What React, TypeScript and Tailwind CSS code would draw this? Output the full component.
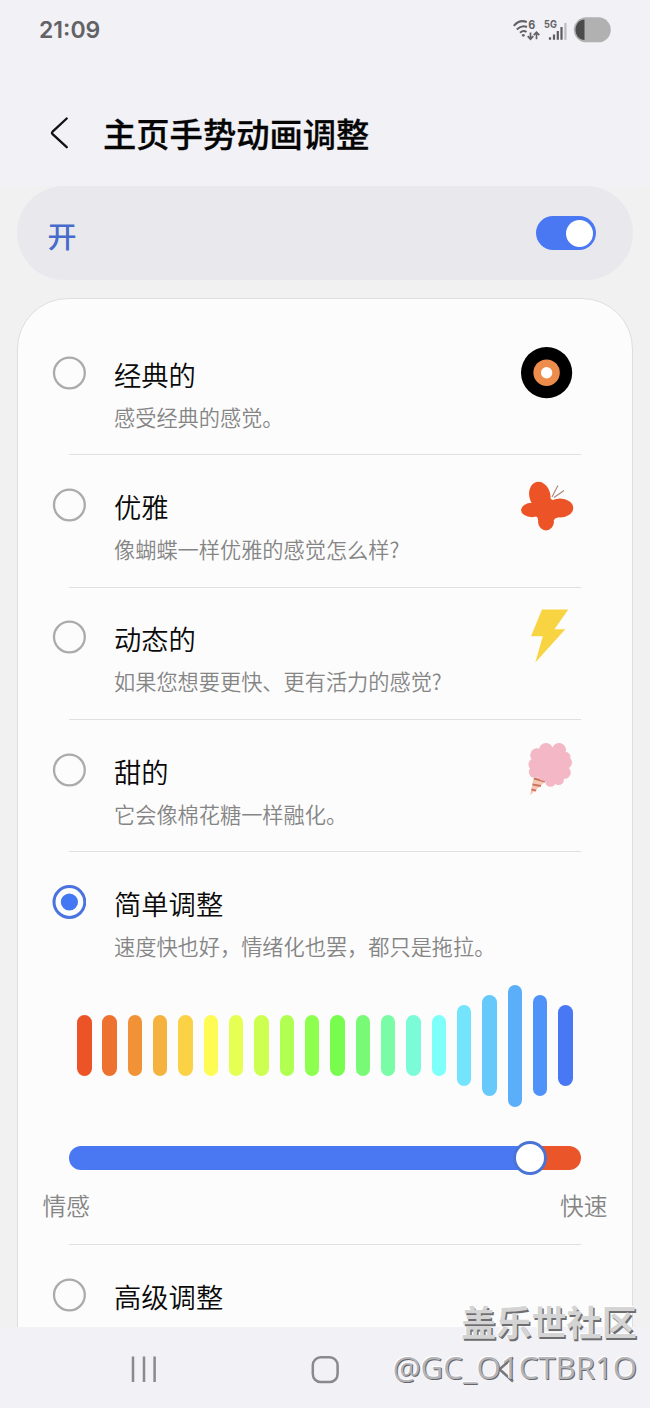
import React from 'react';

const BARS: { color: string; height: number }[] = [
  { color: '#ec5428', height: 61 },
  { color: '#ee722f', height: 61 },
  { color: '#f19237', height: 61 },
  { color: '#f6b23f', height: 61 },
  { color: '#fbd245', height: 61 },
  { color: '#fffb55', height: 61 },
  { color: '#e6ff53', height: 61 },
  { color: '#cdff51', height: 61 },
  { color: '#b1ff50', height: 61 },
  { color: '#8dff4f', height: 61 },
  { color: '#78fc4e', height: 61 },
  { color: '#79fa77', height: 61 },
  { color: '#7afba5', height: 61 },
  { color: '#7cfbd9', height: 61 },
  { color: '#7efffa', height: 61 },
  { color: '#73e4fb', height: 81 },
  { color: '#67c8fa', height: 101 },
  { color: '#5aaefa', height: 122 },
  { color: '#4f93f9', height: 101 },
  { color: '#4978f5', height: 81 },
];

function Radio({ checked = false }: { checked?: boolean }) {
  return (
    <svg className="size-[34px] shrink-0" viewBox="0 0 34 34" fill="none">
      {checked ? (
        <>
          <circle cx="17.4" cy="17" r="15.4" stroke="#4a73e0" strokeWidth="3" />
          <circle cx="17.4" cy="17" r="8.6" fill="#4478f2" />
        </>
      ) : (
        <circle cx="17.4" cy="17" r="15.4" stroke="#ababab" strokeWidth="2.3" />
      )}
    </svg>
  );
}

function Option({ title, text, checked, icon }: { title: string; text: string; checked?: boolean; icon?: React.ReactNode }) {
  return (
    <div className="flex h-[132.25px] items-start pt-[32.75px] pl-[34px] pr-[58px]">
      <Radio checked={checked} />
      <div className="ml-[28px] flex grow flex-col">
        <span className="h-[37px] text-[27.3px] leading-[37px] font-[350] text-[#0a0a0a]">{title}</span>
        <span className="mt-[9px] h-[30px] whitespace-nowrap text-[21.2px] leading-[30px] font-[350] text-[#858585]">{text}</span>
      </div>
      {icon}
    </div>
  );
}

const Divider = () => <div className="mx-[51px] -mt-px h-px bg-[#e0e0e0]" />;

const Record = () => (
  <svg className="-mt-[10px] h-[54px] w-[54px] shrink-0" viewBox="0 0 54 54">
    <circle cx="26.6" cy="26.7" r="25.6" fill="#000" />
    <circle cx="26.6" cy="26.7" r="13.2" fill="#ee8c4c" />
    <circle cx="26.6" cy="26.7" r="5.7" fill="#fff" />
  </svg>
);

const Butterfly = () => (
  <svg className="-mt-[10px] h-[54px] w-[54px] shrink-0" viewBox="0 0 54 54">
    <g fill="#ec5428">
      <ellipse cx="19.8" cy="17.4" rx="10.5" ry="13.7" transform="rotate(-14 19.8 17.4)" />
      <ellipse cx="40" cy="30" rx="13.2" ry="9.5" />
      <ellipse cx="12" cy="32" rx="11" ry="7.2" />
      <ellipse cx="26" cy="43.5" rx="8" ry="9" />
      <path d="M14 25L30 19.500Q31 22 35 22.500L38 39.500Q35 39.500 34 42H18Q18 38.500 15 38z" />
    </g>
    <path d="M32 19L37.900 7.600M34 19.500L44 12.500" stroke="#a88577" strokeWidth="1.100" />
  </svg>
);

const Bolt = () => (
  <svg className="-mt-[11px] h-[54px] w-[54px] shrink-0" viewBox="0 0 54 54">
    <path d="M22 .5H48.300L34.500 20.200H45.300L15.300 53.500 22.800 27.300H11z" fill="#f9d442" />
  </svg>
);

const CottonCandy = () => (
  <svg className="-mt-[11px] h-[54px] w-[54px] shrink-0" viewBox="0 0 54 54">
    <path d="M14 34L10 53.300 26 39z" fill="#f7c7b6" />
    <path d="M14 36.500L25 39.500M12.500 42.500L21 44M11.500 47.500L16.200 48.600" stroke="#ca765f" strokeWidth="2" />
    <g fill="#f4b7c5">
      <circle cx="30" cy="23" r="17" />
      <circle cx="26" cy="8" r="7" />
      <circle cx="39" cy="8" r="7" />
      <circle cx="17" cy="13" r="6.8" />
      <circle cx="45.500" cy="15" r="5" />
      <circle cx="45.500" cy="20.500" r="6.500" />
      <circle cx="14.800" cy="22.500" r="6.300" />
      <circle cx="14.800" cy="30" r="6" />
      <circle cx="44.500" cy="30.500" r="6.300" />
      <circle cx="38.500" cy="37.500" r="5.500" />
      <circle cx="30.500" cy="39.500" r="5.300" />
      <circle cx="23" cy="34" r="4.500" />
    </g>
  </svg>
);

function StatusBar() {
  return (
    <div className="flex h-[60px] items-center pl-[39px] pr-[38px]">
      <span className="mt-px grow font-[Inter] text-[23px] leading-none font-semibold text-[#626265]">21:09</span>
      <svg className="h-[30px] w-[100px]" viewBox="0 0 100 30" fill="none">
        <g stroke="#636366" strokeWidth="2">
          <path d="M1.800 10.800C5.500 6.500 10.500 5.300 14.800 7M4.800 14.500C8 11.300 11.500 10.500 15 12M8 17.800C10.400 15.700 12.500 15.600 14.500 17" />
          <path d="M18.500 17.500v6.500M15.700 21.200l2.800 3 2.800-3M24.500 24.200v-6.500M21.700 20.200l2.800-3 2.800 3" strokeWidth="1.700" />
        </g>
        <circle cx="11.300" cy="20.300" r="1.400" fill="#636366" />
        <text x="16.300" y="14" fill="#636366" fontFamily="Inter" fontWeight="700" fontSize="11.500" textLength="7" lengthAdjust="spacingAndGlyphs">6</text>
        <text x="32" y="13.300" fill="#636366" fontFamily="Inter" fontWeight="700" fontSize="10.500" textLength="12.800" lengthAdjust="spacingAndGlyphs">5G</text>
        <path d="M38 22.300v2.500M42 19.500v5.300M45.800 16v8.800M49.500 12v12.800" stroke="#5d5d60" strokeWidth="2.200" />
        <path d="M53.400 8v16.800" stroke="#bdbdc0" strokeWidth="2.200" />
        <rect x="61.800" y="2.300" width="37" height="25" rx="12.500" fill="#b1b1b1" />
        <path d="M72.500 4.500C60.500 5 60.500 24.500 72.500 25z" fill="#4b4b4b" />
      </svg>
    </div>
  );
}

export default function App() {
  return (
    <div lang="zh-CN" className="relative flex h-[1408px] w-[650px] flex-col overflow-hidden bg-[#f1f1f1] font-['Noto_Sans_CJK_SC',sans-serif]">
      <header className="h-[186px] shrink-0 bg-[#f1f1f6]">
        <StatusBar />
        <div className="flex h-[146px] items-center pl-[50px]">
          <svg className="h-8 w-5" viewBox="0 0 20 32" fill="none" stroke="#111" strokeWidth="2.3" strokeLinecap="round" strokeLinejoin="round">
            <path d="M16.7 1.5L2.6 14.7Q1.3 16 2.6 17.2L16.7 30.2" />
          </svg>
          <h1 className="ml-[33px] text-[33.3px] leading-[44px] font-medium text-[#050505] [-webkit-text-stroke:0.3px_#050505]">主页手势动画调整</h1>
        </div>
      </header>
      <main className="flex h-[1141px] shrink-0 flex-col overflow-hidden px-[17px]">
        <section className="flex h-[94px] shrink-0 items-center justify-between rounded-full bg-[#e9e9ed] pr-[37.500px] pl-[30.500px]">
          <span className="mt-[3px] text-[29px] leading-[40px] font-medium text-[#476bcb]">开</span>
          <span className="flex h-[34px] w-[59.500px] items-center justify-end rounded-full bg-[#4a78f3] pr-[2.500px]">
            <span className="size-[27px] rounded-full bg-white" />
          </span>
        </section>
        <section className="mt-[18px] h-[1100px] shrink-0 rounded-t-[51px] border border-[#dedede] bg-[#fcfcfc] pt-[24.100px]">
          <Option title="经典的" text="感受经典的感觉。" icon={<Record />} />
          <Divider />
          <Option title="优雅" text="像蝴蝶一样优雅的感觉怎么样?" icon={<Butterfly />} />
          <Divider />
          <Option title="动态的" text="如果您想要更快、更有活力的感觉?" icon={<Bolt />} />
          <Divider />
          <Option title="甜的" text="它会像棉花糖一样融化。" icon={<CottonCandy />} />
          <Divider />
          <Option title="简单调整" text="速度快也好，情绪化也罢，都只是拖拉。" checked />
          <div className="mx-[59px] mt-[0.500px] flex h-[122px] items-center justify-between">
            {BARS.map((bar) => (
              <span key={bar.color} className="w-[14.500px] rounded-full" style={{ height: bar.height, backgroundColor: bar.color }} />
            ))}
          </div>
          <div className="mx-[51px] mt-[34px] flex h-[34px] items-center">
            <span className="h-[24px] w-[452px] rounded-l-full bg-[#4a78f3]" />
            <span className="z-10 -mx-[8px] size-[34px] shrink-0 rounded-full border-[3px] border-[#4a73d6] bg-white" />
            <span className="h-[24px] grow rounded-r-full bg-[#ea5529]" />
          </div>
          <div className="mt-[12px] flex h-[36px] justify-between pr-[24.500px] pl-[24.500px] text-[23.700px] leading-[36px] font-[350] text-[#858585]">
            <span>情感</span>
            <span>快速</span>
          </div>
          <div className="mt-[22.200px]">
            <Divider />
          </div>
          <Option title="高级调整" text="" />
        </section>
      </main>
      <nav className="h-[81px] shrink-0 bg-[#f1f1f6]">
        <svg className="h-[81px] w-[650px]" viewBox="0 0 650 81" fill="none" stroke="#8a8a8c" strokeWidth="2.5">
          <path d="M133 29.5v25.5M144 29.5v25.5M154.6 29.5v25.5" />
          <rect x="312.8" y="30.3" width="24.8" height="24.8" rx="8" />
          <path d="M513 30.5L499.5 42.3 513 54.5" stroke="#77777a" />
        </svg>
      </nav>
      <div className="absolute right-[13px] bottom-[19px] flex flex-col items-end whitespace-nowrap">
        <span className="text-[35.200px] leading-[50px] font-bold text-[#d4d4d4] [text-shadow:1.5px_1.5px_0_#6e6e71,-1px_-1px_0_#fff]">盖乐世社区</span>
        <span className="font-['Open_Sans',sans-serif] text-[31.200px] leading-[43px] text-[#b4b4b8] [text-shadow:1px_1px_0_#66666a,-1px_-1px_0_#fff]">@GC_O1CTBR1O</span>
      </div>
    </div>
  );
}
